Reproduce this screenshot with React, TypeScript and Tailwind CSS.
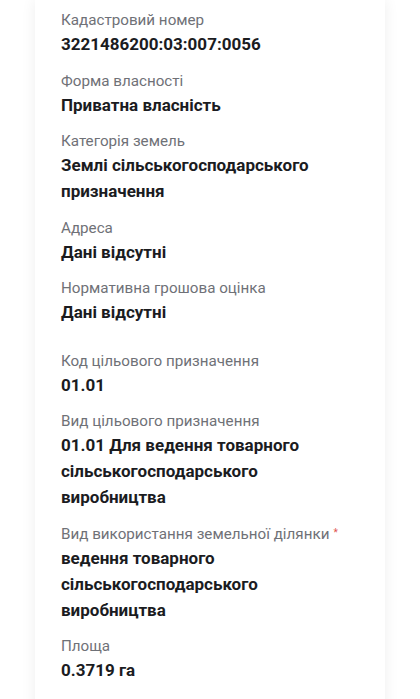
const fields: { label: string; value: string; required?: boolean; gapBefore?: boolean }[] = [
  { label: "Кадастровий номер", value: "3221486200:03:007:0056" },
  { label: "Форма власності", value: "Приватна власність" },
  { label: "Категорія земель", value: "Землі сільськогосподарського призначення" },
  { label: "Адреса", value: "Дані відсутні" },
  { label: "Нормативна грошова оцінка", value: "Дані відсутні" },
  { label: "Код цільового призначення", value: "01.01", gapBefore: true },
  { label: "Вид цільового призначення", value: "01.01 Для ведення товарного сільськогосподарського виробництва" },
  { label: "Вид використання земельної ділянки", value: "ведення товарного сільськогосподарського виробництва", required: true },
  { label: "Площа", value: "0.3719 га" },
];

export default function App() {
  return (
    <div className="min-h-screen bg-white font-['Roboto',sans-serif]">
      <div className="mx-[35px] bg-white pt-[9px] pb-10 pl-[26px] pr-6 shadow-[0_0_14px_rgba(0,0,0,0.07)]">
        {fields.map((f) => (
          <div key={f.label} className={f.gapBefore ? "mt-3 pb-[12.5px]" : "pb-[12.5px]"}>
            <div className="text-[15.2px] leading-[22px] text-[#6f7177]">
              {f.label}
              {f.required ? <sup className="relative -top-[3px] ml-1 text-[10px] text-[#e0544f]">*</sup> : null}
            </div>
            <div className="text-[17px] font-bold leading-[26px] text-[#1b1c1f]">{f.value}</div>
          </div>
        ))}
      </div>
    </div>
  );
}
